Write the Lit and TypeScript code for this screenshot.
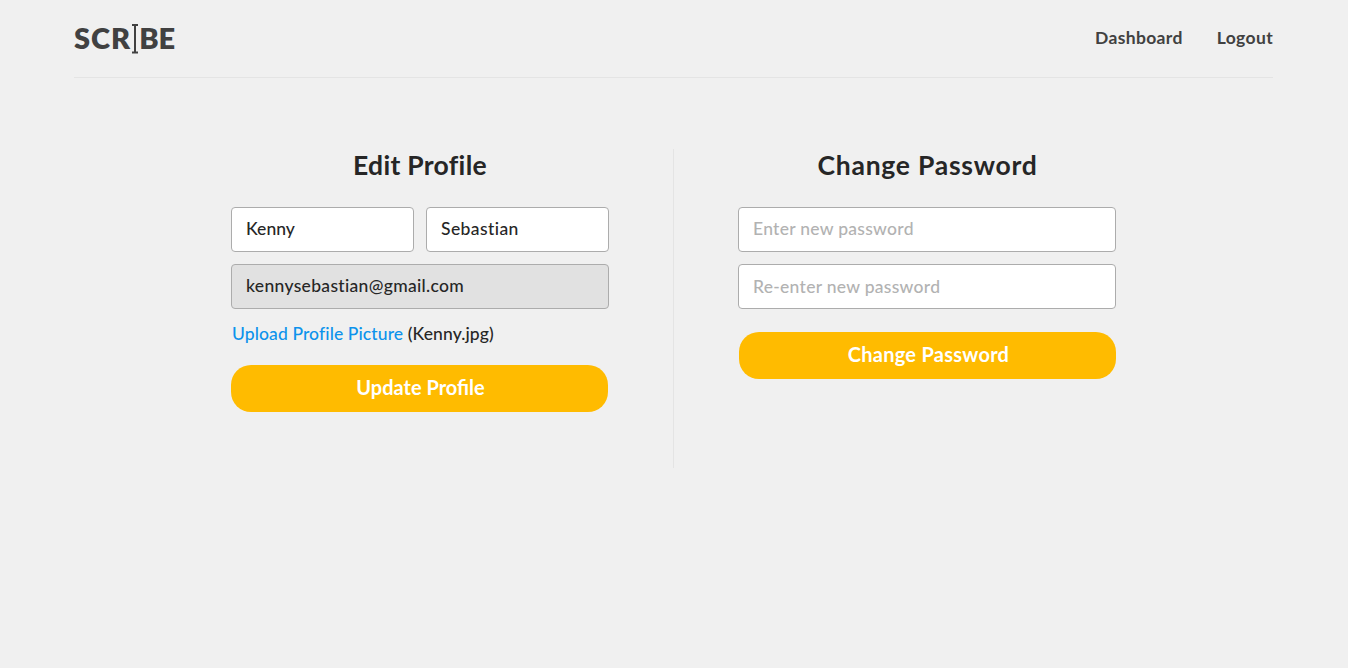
import { LitElement, html, css } from "lit";
import { customElement } from "lit/decorators.js";

@customElement("app-root")
export class AppRoot extends LitElement {
  static styles = css`
    :host {
      display: block;
      height: 670px;
      background: #fff;
      color: #262626;
      font-family: Lato, "Liberation Sans", sans-serif;
      font-size: 17.5px;
      font-weight: 500;
    }
    * { box-sizing: border-box; }
    .page { height: 668px; background: #f0f0f0; }
    header {
      display: flex;
      justify-content: space-between;
      align-items: center;
      height: 78px;
      margin: 0 75px 0 74px;
      border-bottom: 1px solid #e4e4e4;
      color: #414141;
    }
    .logo {
      display: flex;
      align-items: center;
      font-size: 29px;
      font-weight: 800;
      line-height: 30px;
    }
    .logo span { padding-bottom: 2px; }
    .scr { letter-spacing: 1px; }
    .be { letter-spacing: 0; }
    .cursor { display: block; flex: none; }
    nav { display: flex; gap: 34px; font-weight: 700; padding-bottom: 2px; }
    .dash { letter-spacing: 0.35px; }
    .logout { letter-spacing: 0.35px; }
    main { display: flex; padding: 71px 0 0 231px; }
    section { width: 378px; }
    .divider { width: 1px; height: 319px; margin: 0 64px; background: #e4e4e4; }
    h1 {
      margin: 0 0 25px;
      height: 33px;
      line-height: 33px;
      font-size: 26.5px;
      font-weight: 700;
      text-align: center;
      letter-spacing: 0.3px;
    }
    .wide { letter-spacing: 0.75px; padding-left: 1px; }
    .row { display: flex; gap: 12px; }
    input {
      display: block;
      width: 100%;
      min-width: 0;
      height: 45px;
      margin: 0 0 12px;
      padding: 0 14px 2px;
      border: 1px solid #acacac;
      border-radius: 4px;
      background: #fff;
      color: #262626;
      font: inherit;
      letter-spacing: 0.28px;
    }
    .first { letter-spacing: 0.05px; }
    .last { letter-spacing: 0.42px; }
    input::placeholder { color: #b2b2b2; opacity: 1; }
    input:read-only { background: #e1e1e1; padding-bottom: 3px; letter-spacing: 0.32px; }
    .again { padding-bottom: 1px; }
    .upload { height: 20px; margin: 16px 0 20px 1px; line-height: 18px; }
    .link { color: #0c93ec; letter-spacing: 0.11px; }
    .file { letter-spacing: 0.12px; }
    button {
      display: block;
      width: 377px;
      height: 47px;
      padding: 0 0 4px;
      border: 0;
      border-radius: 20px;
      background: #ffbb00;
      color: #fff;
      font: inherit;
      font-size: 20px;
      font-weight: 700;
    }
    .update { padding-left: 2px; }
    .change { margin: 23px 0 0 1px; padding-left: 2px; letter-spacing: 0.26px; }
  `;

  render() {
    return html`
      <div class="page">
        <header>
          <div class="logo">
            <span class="scr">SCR</span>
            <svg class="cursor" width="8" height="30" viewBox="0 0 8 30" fill="none" stroke="#414141">
              <path d="M1 1h6M1 28.5h6" stroke-width="2" />
              <path d="M4 1v28" stroke-width="2" />
            </svg>
            <span class="be">BE</span>
          </div>
          <nav><span class="dash">Dashboard</span><span class="logout">Logout</span></nav>
        </header>
        <main>
          <section>
            <h1>Edit Profile</h1>
            <div class="row">
              <input class="first" .value=${"Kenny"} />
              <input class="last" .value=${"Sebastian"} />
            </div>
            <input class="email" readonly .value=${"kennysebastian@gmail.com"} />
            <div class="upload"><a class="link">Upload Profile Picture</a> <span class="file">(Kenny.jpg)</span></div>
            <button class="update">Update Profile</button>
          </section>
          <div class="divider"></div>
          <section>
            <h1 class="wide">Change Password</h1>
            <input class="pass" placeholder="Enter new password" />
            <input class="again" placeholder="Re-enter new password" />
            <button class="change">Change Password</button>
          </section>
        </main>
      </div>
    `;
  }
}
